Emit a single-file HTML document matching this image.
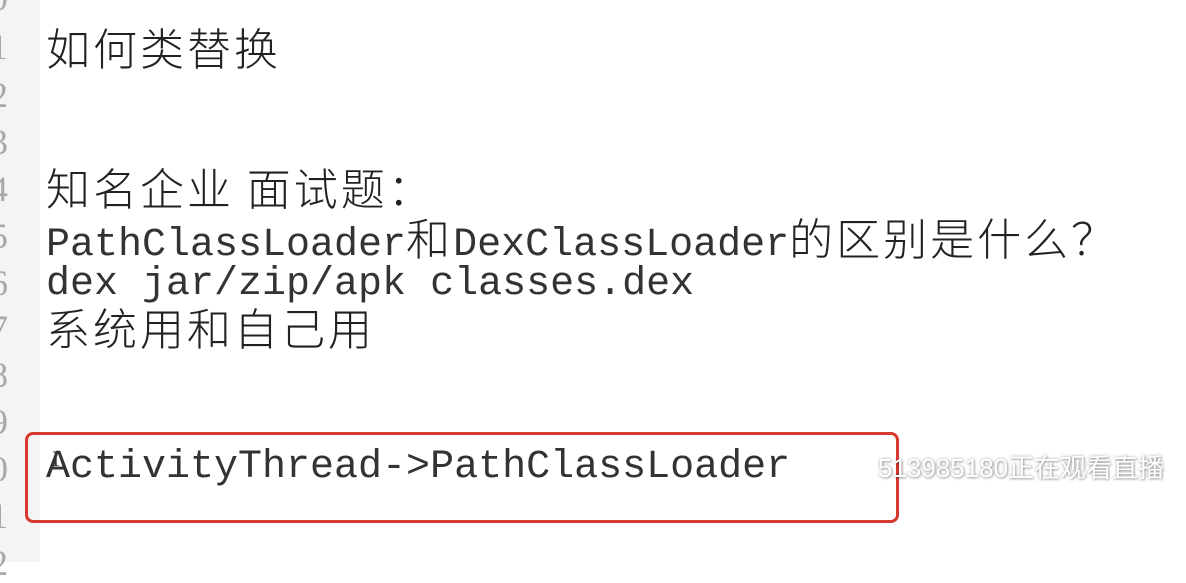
<!DOCTYPE html>
<html><head><meta charset="utf-8"><style>
html,body{margin:0;padding:0;}
body{width:1186px;height:562px;background:#fff;position:relative;overflow:hidden;}
.g{position:absolute;left:0;top:0;width:40px;height:562px;background:#f4f4f4;}
.n{position:absolute;left:-10px;font-family:"Liberation Serif",serif;font-size:36px;color:#a8a8a8;line-height:40px;}
.l{position:absolute;left:46px;font-family:"Liberation Mono","Noto Sans CJK SC",monospace;font-size:40px;line-height:48px;color:#333;white-space:pre;}
.c{letter-spacing:3px;font-size:44px;font-family:"Noto Sans CJK SC","WenQuanYi Zen Hei",sans-serif;font-weight:300;color:#222;}
.box{position:absolute;left:25px;top:432px;width:868px;height:85px;border:3px solid #d8392f;border-radius:8px;}
.w{position:absolute;left:878px;top:448px;font-family:"Liberation Sans","Noto Sans CJK SC",sans-serif;font-size:26px;color:#fff;text-shadow:0 0 3px rgba(0,0,0,.35),1px 1px 2px rgba(0,0,0,.25);white-space:nowrap;}
</style></head><body>
<div class="g"></div>
<div class="n" style="top:-22px">0</div>
<div class="n" style="top:27px">1</div>
<div class="n" style="top:75px">2</div>
<div class="n" style="top:122px">3</div>
<div class="n" style="top:169px">4</div>
<div class="n" style="top:216px">5</div>
<div class="n" style="top:263px">6</div>
<div class="n" style="top:308px">7</div>
<div class="n" style="top:355px">8</div>
<div class="n" style="top:402px">9</div>
<div class="n" style="top:449px">0</div>
<div class="n" style="top:496px">1</div>
<div class="n" style="top:543px">2</div>

<div class="l" style="top:22px"><span class="c">如何类替换</span></div>
<div class="l" style="top:162px"><span class="c">知名企业 面试题：</span></div>
<div class="l" style="top:212px">PathClassLoader<span class="c">和</span>DexClassLoader<span class="c">的区别是什么？</span></div>
<div class="l" style="top:261px">dex jar/zip/apk classes.dex</div>
<div class="l" style="top:302px"><span class="c">系统用和自己用</span></div>
<div class="l" style="top:444px">ActivityThread-&gt;PathClassLoader</div>
<div style="position:absolute;left:52px;top:446px;font-family:'Liberation Serif',serif;font-size:22px;color:#333">I</div>
<div class="box"></div>
<div class="w">513985180正在观看直播</div>
</body></html>
